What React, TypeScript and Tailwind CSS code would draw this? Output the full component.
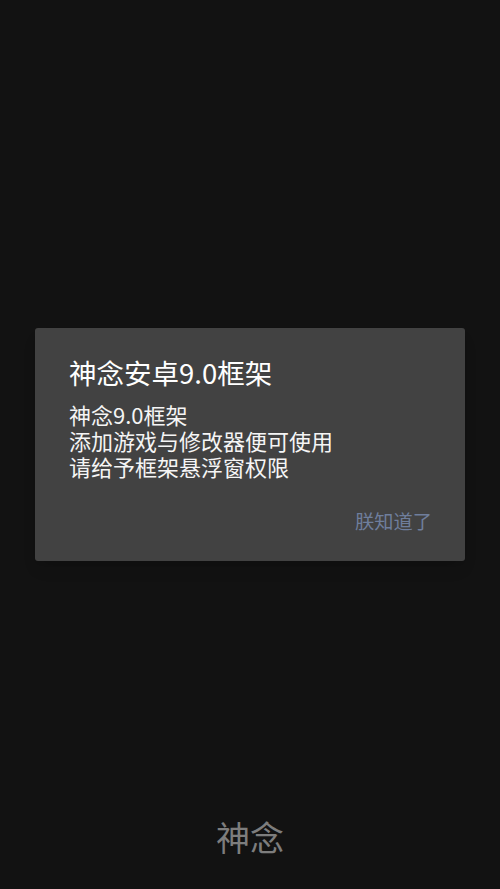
import React from "react";

const font = { fontFamily: '"Noto Sans CJK SC", "Noto Sans", sans-serif' };

export default function App() {
  return (
    <div className="relative w-full h-[889px] bg-[#121212] overflow-hidden" style={font}>
      <div className="flex flex-col h-full justify-end items-center pb-[32px]">
        <div className="text-[34px] leading-[40px] text-[#7d7d7d]">神念</div>
      </div>
      <div className="absolute inset-0 flex items-center justify-center">
        <div className="w-[430px] bg-[#424242] rounded-[3px] pt-[28px] pb-[22px] flex flex-col shadow-lg">
          <div className="px-[34px] text-[27.5px] leading-[32px] text-white">神念安卓9.0框架</div>
          <div className="px-[34px] mt-[13px] text-[22px] leading-[26px] text-[#f5f5f5]">
            <div>神念9.0框架</div>
            <div>添加游戏与修改器便可使用</div>
            <div>请给予框架悬浮窗权限</div>
          </div>
          <div className="mt-[24px] flex justify-end pr-[33px]">
            <button className="h-[36px] text-[19.25px] text-[#6f7e9c]">朕知道了</button>
          </div>
        </div>
      </div>
    </div>
  );
}
